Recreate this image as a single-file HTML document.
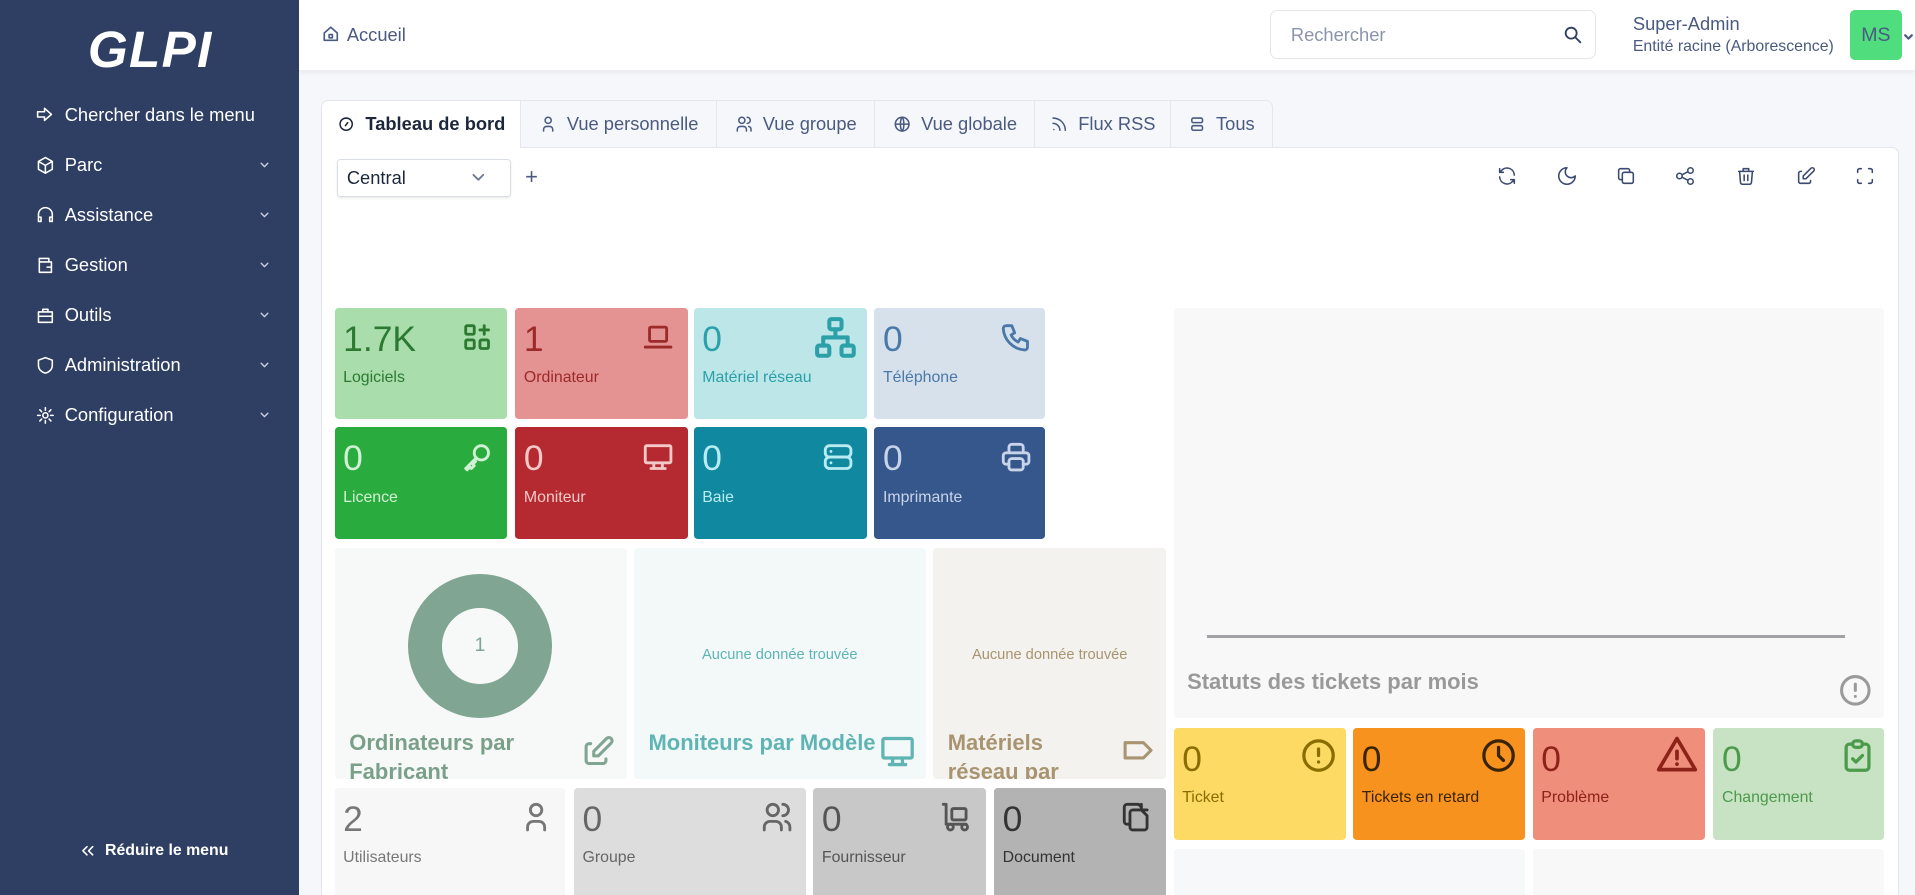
<!DOCTYPE html>
<html><head><meta charset="utf-8"><style>
html,body{margin:0;padding:0;width:1915px;height:895px;overflow:hidden;background:#f5f7fb}
#w{zoom:1.22130;width:1568px;height:733px;position:relative;font-family:"Liberation Sans",sans-serif;overflow:hidden}
.a{position:absolute}
svg{fill:none;stroke:currentColor;stroke-width:2;stroke-linecap:round;stroke-linejoin:round}
.side{left:0;top:0;width:245px;height:733px;background:#2f3e63;color:#fff}
.mi{position:absolute;left:29px;font-size:15px;color:#fff;display:flex;align-items:center}
.mi svg{width:17px;height:17px;margin-right:7px;stroke-width:1.8}
.chev{position:absolute;left:212px;width:9px;height:9px;stroke-width:1.3;color:#c8cede}
.card{position:absolute;border-radius:3px}
.card .n{position:absolute;left:7px;top:9px;font-size:29px;font-weight:300}
.card .l{position:absolute;left:7px;top:50px;font-size:13px}
.card svg{position:absolute;right:10px;top:10px;width:28px;height:28px;stroke-width:2}
.tab{position:absolute;top:82px;height:38px;border:1px solid #e3e6ec;border-bottom:none;background:#f5f7fb;color:#4a5a80;font-size:15px;display:flex;align-items:center;justify-content:center;box-sizing:border-box}
.tab svg{width:15px;height:15px;margin-right:8px}
.tb{position:absolute;top:135px;width:18px;height:18px;color:#3b4a72;stroke-width:1.7}
.ch{position:absolute;border-radius:3px}
.ch h3{position:absolute;margin:0;font-size:18px;font-weight:bold;line-height:24px}
</style></head><body><div id="w">
<div class="a side">
 <div class="a" style="left:72px;top:16px;font-size:42px;font-style:italic;font-weight:bold;letter-spacing:1px;color:#fff">GLPI</div>
 <div class="mi" style="top:85px"><svg viewBox="0 0 24 24"><path d="M3 9h8V5l8 7-8 7v-4H3z"/></svg>Chercher dans le menu</div>
 <div class="mi" style="top:126px"><svg viewBox="0 0 24 24"><path d="M12 3l8 4.5v9L12 21l-8-4.5v-9z M12 12l8-4.5 M12 12v9 M12 12L4 7.5"/></svg>Parc</div>
 <div class="mi" style="top:167px"><svg viewBox="0 0 24 24"><path d="M4 14v-3a8 8 0 0116 0v3 M4 14h3v5H4z M17 14h3v5h-3z"/></svg>Assistance</div>
 <div class="mi" style="top:208px"><svg viewBox="0 0 24 24"><path d="M5 4h11v4H5z M5 8h14v12H5z M14 14h5"/></svg>Gestion</div>
 <div class="mi" style="top:249px"><svg viewBox="0 0 24 24"><path d="M4 8h16v12H4z M9 8V5h6v3 M4 13h16"/></svg>Outils</div>
 <div class="mi" style="top:290px"><svg viewBox="0 0 24 24"><path d="M12 3l8 3v6c0 5-4 8-8 9-4-1-8-4-8-9V6z"/></svg>Administration</div>
 <div class="mi" style="top:331px"><svg viewBox="0 0 24 24"><circle cx="12" cy="12" r="3"/><path d="M12 3v3M12 18v3M3 12h3M18 12h3M5.6 5.6l2.1 2.1M16.3 16.3l2.1 2.1M5.6 18.4l2.1-2.1M16.3 7.7l2.1-2.1"/></svg>Configuration</div>
 <svg class="chev" style="top:131px" viewBox="0 0 10 10"><path d="M2 3l3 3 3-3"/></svg>
 <svg class="chev" style="top:172px" viewBox="0 0 10 10"><path d="M2 3l3 3 3-3"/></svg>
 <svg class="chev" style="top:213px" viewBox="0 0 10 10"><path d="M2 3l3 3 3-3"/></svg>
 <svg class="chev" style="top:254px" viewBox="0 0 10 10"><path d="M2 3l3 3 3-3"/></svg>
 <svg class="chev" style="top:295px" viewBox="0 0 10 10"><path d="M2 3l3 3 3-3"/></svg>
 <svg class="chev" style="top:336px" viewBox="0 0 10 10"><path d="M2 3l3 3 3-3"/></svg>
 <div class="a" style="left:64px;top:689px;font-size:13px;font-weight:bold;display:flex;align-items:center"><svg viewBox="0 0 24 24" style="width:16px;height:16px;margin-right:6px"><path d="M11 7l-5 5 5 5M18 7l-5 5 5 5"/></svg>Réduire le menu</div>
</div>
<div class="a" style="left:245px;top:0;width:1323px;height:57px;background:#fff;box-shadow:0 2px 4px rgba(0,0,0,.06)">
 <svg class="a" style="left:18px;top:20px;width:16px;height:16px;color:#4a5a80" viewBox="0 0 24 24"><path d="M4 11l8-7 8 7v9H4z M10 13h4v4h-4z"/></svg>
 <div class="a" style="left:39px;top:20px;font-size:15px;color:#4a5a80">Accueil</div>
 <div class="a" style="left:795px;top:8px;width:267px;height:40px;border:1px solid #e3e6ec;border-radius:6px;box-sizing:border-box"></div>
 <div class="a" style="left:812px;top:20px;font-size:15px;color:#8a94ad">Rechercher</div>
 <svg class="a" style="left:1034px;top:20px;width:18px;height:18px;color:#2f3e63" viewBox="0 0 24 24"><circle cx="10" cy="10" r="6"/><path d="M15 15l5 5"/></svg>
 <div class="a" style="left:1092px;top:11px;font-size:15px;color:#4a5a80">Super-Admin</div>
 <div class="a" style="left:1092px;top:31px;font-size:13px;color:#4a5a80">Entité racine (Arborescence)</div>
 <div class="a" style="left:1270px;top:8px;width:42px;height:41px;background:#50dd7e;border-radius:4px;color:#4a5a80;font-size:16px;text-align:center;line-height:41px">MS</div>
 <svg class="a" style="left:1313px;top:26px;width:9px;height:9px;color:#4a5a80" viewBox="0 0 10 10"><path d="M2 3l3 3 3-3"/></svg>
</div>
<div class="a" style="left:263px;top:120px;width:1292px;height:620px;background:#fff;border:1px solid #e3e6ec;border-radius:0 6px 0 0;box-sizing:border-box"></div>
<div class="tab" style="left:263px;width:164px;background:#fff;color:#1d273b;font-weight:bold;border-radius:6px 0 0 0;height:39px"><svg viewBox="0 0 24 24"><circle cx="12" cy="12" r="8"/><path d="M11 14l3-4"/></svg>Tableau de bord</div>
<div class="tab" style="left:426px;width:161px"><svg viewBox="0 0 24 24"><circle cx="12" cy="7" r="4"/><path d="M6 21v-2a4 4 0 014-4h4a4 4 0 014 4v2"/></svg>Vue personnelle</div>
<div class="tab" style="left:586px;width:131px"><svg viewBox="0 0 24 24"><circle cx="9" cy="7" r="4"/><path d="M3 21v-2a4 4 0 014-4h4a4 4 0 014 4v2M16 3a4 4 0 010 8M21 21v-2a4 4 0 00-3-4"/></svg>Vue groupe</div>
<div class="tab" style="left:716px;width:132px"><svg viewBox="0 0 24 24"><circle cx="12" cy="12" r="9"/><path d="M3 12h18M12 3c3 3 3 15 0 18M12 3c-3 3-3 15 0 18"/></svg>Vue globale</div>
<div class="tab" style="left:847px;width:112px"><svg viewBox="0 0 24 24"><path d="M5 19h.01M4 4a16 16 0 0116 16M4 11a9 9 0 019 9"/></svg>Flux RSS</div>
<div class="tab" style="left:958px;width:84px;border-radius:0 6px 0 0"><svg viewBox="0 0 24 24"><rect x="5" y="4" width="14" height="6" rx="2"/><rect x="5" y="14" width="14" height="6" rx="2"/></svg>Tous</div>
<div class="a" style="left:276px;top:130px;width:142px;height:31px;border:1px solid #dadfe5;border-radius:3px;box-sizing:border-box;box-shadow:0 1px 2px rgba(0,0,0,.08)"></div>
<div class="a" style="left:284px;top:137px;font-size:15px;color:#1d273b">Central</div>
<svg class="a" style="left:386px;top:139px;width:12px;height:12px;color:#6a7590;stroke-width:1.5" viewBox="0 0 12 12"><path d="M2 4l4 4 4-4"/></svg>
<div class="a" style="left:430px;top:134px;font-size:18px;color:#4a5a80">+</div>
<svg class="tb" style="left:1225px" viewBox="0 0 24 24"><path d="M20 11A8 8 0 006 6l-2 2M4 4v4h4M4 13a8 8 0 0014 5l2-2M20 20v-4h-4"/></svg>
<svg class="tb" style="left:1274px" viewBox="0 0 24 24"><path d="M12 3a6 6 0 009 9 9 9 0 11-9-9z"/></svg>
<svg class="tb" style="left:1322px" viewBox="0 0 24 24"><rect x="8" y="8" width="12" height="12" rx="2"/><path d="M16 8V6a2 2 0 00-2-2H6a2 2 0 00-2 2v8a2 2 0 002 2h2"/></svg>
<svg class="tb" style="left:1371px" viewBox="0 0 24 24"><circle cx="6" cy="12" r="3"/><circle cx="18" cy="6" r="3"/><circle cx="18" cy="18" r="3"/><path d="M8.7 10.7l6.6-3.4M8.7 13.3l6.6 3.4"/></svg>
<svg class="tb" style="left:1421px" viewBox="0 0 24 24"><path d="M4 7h16M10 11v6M14 11v6M5 7l1 12a2 2 0 002 2h8a2 2 0 002-2l1-12M9 7V4h6v3"/></svg>
<svg class="tb" style="left:1470px" viewBox="0 0 24 24"><path d="M7 7H6a2 2 0 00-2 2v9a2 2 0 002 2h9a2 2 0 002-2v-1M20.4 6.6a2.1 2.1 0 00-3-3L9 12v3h3z"/></svg>
<svg class="tb" style="left:1518px" viewBox="0 0 24 24"><path d="M4 8V6a2 2 0 012-2h2M4 16v2a2 2 0 002 2h2M16 4h2a2 2 0 012 2v2M16 20h2a2 2 0 002-2v-2"/></svg>

<div class="card" style="left:274px;top:252px;width:141px;height:91px;background:#a9ddab;color:#2c7a31"><div class="n">1.7K</div><div class="l">Logiciels</div><svg viewBox="0 0 24 24"><rect x="4" y="4" width="6" height="6" rx="1"/><rect x="4" y="14" width="6" height="6" rx="1"/><rect x="14" y="14" width="6" height="6" rx="1"/><path d="M14 7h6M17 4v6"/></svg></div>
<div class="card" style="left:422px;top:252px;width:141px;height:91px;background:#e59392;color:#9b2a2a"><div class="n">1</div><div class="l">Ordinateur</div><svg viewBox="0 0 24 24"><rect x="6" y="5" width="12" height="10" rx="1"/><path d="M3 19h18"/></svg></div>
<div class="card" style="left:568px;top:252px;width:142px;height:91px;background:#bde6e8;color:#2ba0a8"><div class="n">0</div><div class="l">Matériel réseau</div><svg viewBox="0 0 24 24" style="width:40px;height:40px;right:6px;top:4px"><rect x="9" y="3" width="6" height="5" rx="1"/><rect x="3" y="16" width="6" height="5" rx="1"/><rect x="15" y="16" width="6" height="5" rx="1"/><path d="M12 8v4M6 16v-4h12v4"/></svg></div>
<div class="card" style="left:716px;top:252px;width:140px;height:91px;background:#d6e1ec;color:#4a78a8"><div class="n">0</div><div class="l">Téléphone</div><svg viewBox="0 0 24 24"><path d="M5 4h4l2 5-2.5 1.5a11 11 0 005 5L15 13l5 2v4a2 2 0 01-2 2A16 16 0 013 6a2 2 0 012-2"/></svg></div>
<div class="card" style="left:274px;top:350px;width:141px;height:91px;background:#2aab3e;color:#d1f0d4"><div class="n">0</div><div class="l">Licence</div><svg viewBox="0 0 24 24"><circle cx="15" cy="9" r="5"/><path d="M11.5 12.5L4 20l1 1 2-2 1 1 2-2-1-1 2-2"/></svg></div>
<div class="card" style="left:422px;top:350px;width:141px;height:91px;background:#b52a30;color:#f3c8c8"><div class="n">0</div><div class="l">Moniteur</div><svg viewBox="0 0 24 24"><rect x="3" y="4" width="18" height="12" rx="1"/><path d="M7 20h10M9 16v4M15 16v4"/></svg></div>
<div class="card" style="left:568px;top:350px;width:142px;height:91px;background:#0f88a0;color:#b9ecf2"><div class="n">0</div><div class="l">Baie</div><svg viewBox="0 0 24 24"><rect x="3" y="4" width="18" height="8" rx="3"/><rect x="3" y="12" width="18" height="8" rx="3"/><path d="M7 8h.01M7 16h.01"/></svg></div>
<div class="card" style="left:716px;top:350px;width:140px;height:91px;background:#36578b;color:#c8d4ea"><div class="n">0</div><div class="l">Imprimante</div><svg viewBox="0 0 24 24"><path d="M17 17h2a2 2 0 002-2v-4a2 2 0 00-2-2H5a2 2 0 00-2 2v4a2 2 0 002 2h2M17 9V5a2 2 0 00-2-2H9a2 2 0 00-2 2v4"/><rect x="7" y="13" width="10" height="8" rx="2"/></svg></div>

<div class="ch" style="left:274px;top:449px;width:239px;height:189px;background:#f7f8f8;overflow:hidden">
 <div class="a" style="left:60px;top:21px;width:118px;height:118px;border-radius:50%;background:#80a592"></div>
 <div class="a" style="left:88px;top:49px;width:62px;height:62px;border-radius:50%;background:#f7f8f8;text-align:center;line-height:62px;font-size:16px;color:#80a592">1</div>
 <h3 style="left:12px;top:147px;color:#7aa08a">Ordinateurs par<br>Fabricant</h3>
 <svg class="a" style="left:201px;top:151px;width:30px;height:30px;color:#80a592" viewBox="0 0 24 24"><path d="M7 7H6a2 2 0 00-2 2v9a2 2 0 002 2h9a2 2 0 002-2v-1M20.4 6.6a2.1 2.1 0 00-3-3L9 12v3h3z"/></svg>
</div>
<div class="ch" style="left:519px;top:449px;width:239px;height:189px;background:#f3f8f9;overflow:hidden">
 <div class="a" style="left:0;width:239px;top:81px;text-align:center;font-size:12px;color:#5fb4b4">Aucune donnée trouvée</div>
 <h3 style="left:12px;top:147px;color:#5fb4b4">Moniteurs par Modèle</h3>
 <svg class="a" style="left:200px;top:150px;width:32px;height:32px;color:#5fb4b4" viewBox="0 0 24 24"><rect x="3" y="4" width="18" height="12" rx="1"/><path d="M7 20h10M9 16v4M15 16v4"/></svg>
</div>
<div class="ch" style="left:764px;top:449px;width:191px;height:189px;background:#f3f2ee;overflow:hidden">
 <div class="a" style="left:0;width:191px;top:81px;text-align:center;font-size:12px;color:#a89470">Aucune donnée trouvée</div>
 <h3 style="left:12px;top:147px;color:#a89470">Matériels<br>réseau par</h3>
 <svg class="a" style="left:152px;top:150px;width:30px;height:30px;color:#a89470" viewBox="0 0 24 24"><path d="M4 7h12l5 5-5 5H4z"/></svg>
</div>

<div class="card" style="left:274px;top:645px;width:189px;height:95px;background:#f7f7f7;color:#777"><div class="n">2</div><div class="l">Utilisateurs</div><svg viewBox="0 0 24 24"><circle cx="12" cy="7" r="4"/><path d="M6 21v-2a4 4 0 014-4h4a4 4 0 014 4v2"/></svg></div>
<div class="card" style="left:470px;top:645px;width:190px;height:95px;background:#dddddd;color:#666"><div class="n">0</div><div class="l">Groupe</div><svg viewBox="0 0 24 24"><circle cx="9" cy="7" r="4"/><path d="M3 21v-2a4 4 0 014-4h4a4 4 0 014 4v2M16 3a4 4 0 010 8M21 21v-2a4 4 0 00-3-4"/></svg></div>
<div class="card" style="left:666px;top:645px;width:141px;height:95px;background:#c8c8c8;color:#555"><div class="n">0</div><div class="l">Fournisseur</div><svg viewBox="0 0 24 24"><path d="M3 3h2v14h14"/><rect x="9" y="6" width="10" height="8" rx="1"/><circle cx="8" cy="19" r="2"/><circle cx="18" cy="19" r="2"/></svg></div>
<div class="card" style="left:814px;top:645px;width:141px;height:95px;background:#b3b3b3;color:#333"><div class="n">0</div><div class="l">Document</div><svg viewBox="0 0 24 24"><path d="M15 3v4h4M9 7h6l4 4v8a2 2 0 01-2 2H9a2 2 0 01-2-2V9a2 2 0 012-2zM7 17H5a2 2 0 01-2-2V5a2 2 0 012-2h8l2 2"/></svg></div>

<div class="ch" style="left:961px;top:252px;width:582px;height:336px;background:#f8f8f8">
 <div class="a" style="left:27px;top:268px;width:523px;height:2px;background:#a2a2a6"></div>
 <h3 style="left:11px;top:294px;color:#999">Statuts des tickets par mois</h3>
 <svg class="a" style="left:543px;top:298px;width:30px;height:30px;color:#9a9a9a" viewBox="0 0 24 24"><circle cx="12" cy="12" r="9"/><path d="M12 8v4M12 16h.01"/></svg>
</div>
<div class="card" style="left:961px;top:596px;width:141px;height:92px;background:#fdda64;color:#8a6d00"><div class="n">0</div><div class="l">Ticket</div><svg viewBox="0 0 24 24" style="width:32px;height:32px;right:6px;top:7px"><circle cx="12" cy="12" r="9"/><path d="M12 8v4M12 16h.01"/></svg></div>
<div class="card" style="left:1108px;top:596px;width:141px;height:92px;background:#f7921f;color:#3a2406"><div class="n">0</div><div class="l">Tickets en retard</div><svg viewBox="0 0 24 24" style="width:32px;height:32px;right:6px;top:7px"><circle cx="12" cy="12" r="9"/><path d="M12 7v5l3 3"/></svg></div>
<div class="card" style="left:1255px;top:596px;width:141px;height:92px;background:#f08e7c;color:#8c2218"><div class="n">0</div><div class="l">Problème</div><svg viewBox="0 0 24 24" style="width:36px;height:36px;right:5px;top:4px"><path d="M12 3L2 20h20zM12 10v4M12 17h.01"/></svg></div>
<div class="card" style="left:1403px;top:596px;width:140px;height:92px;background:#c8e3c4;color:#4c9a4c"><div class="n">0</div><div class="l">Changement</div><svg viewBox="0 0 24 24" style="width:32px;height:32px;right:6px;top:7px"><path d="M9 5H7a2 2 0 00-2 2v12a2 2 0 002 2h10a2 2 0 002-2V7a2 2 0 00-2-2h-2"/><rect x="9" y="3" width="6" height="4" rx="2"/><path d="M9 14l2 2 4-4"/></svg></div>
<div class="ch" style="left:961px;top:695px;width:288px;height:50px;background:#f7f8fa"></div>
<div class="ch" style="left:1255px;top:695px;width:288px;height:50px;background:#f9f8f9"></div>
</div></body></html>
